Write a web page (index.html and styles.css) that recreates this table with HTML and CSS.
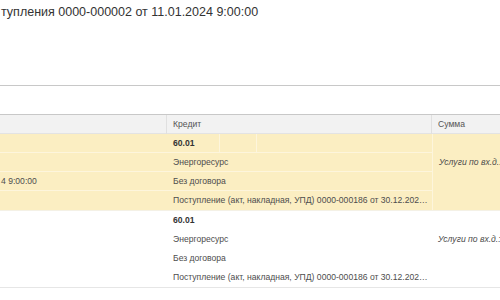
FILE: index.html
```html
<!DOCTYPE html>
<html lang="ru">
<head>
  <meta charset="UTF-8">
  <meta name="viewport" content="width=device-width, initial-scale=1.0">
  <title>Движения документа</title>
  <link rel="stylesheet" href="styles.css">
</head>
<body>
  <h1 class="doc-title">тупления 0000-000002 от 11.01.2024 9:00:00</h1>
  <div class="toolbar"></div>

  <div class="grid">
    <div class="grid-head">
      <div class="hcell"></div>
      <div class="hcell credit">Кредит</div>
      <div class="hcell sum">Сумма</div>
    </div>

    <!-- выделенная запись -->
    <div class="entry selected">
      <div class="cell left r1"></div>
      <div class="cell left r2"></div>
      <div class="cell left r3">4 9:00:00</div>
      <div class="cell left r4"></div>
      <div class="cell acc r1 bold">60.01</div>
      <div class="cell sub1 r1"></div>
      <div class="cell sub2 r1"></div>
      <div class="cell wide r2">Энергоресурс</div>
      <div class="cell wide r3">Без договора</div>
      <div class="cell wide r4">Поступление (акт, накладная, УПД) 0000-000186 от 30.12.202…</div>
      <div class="cell amount">Услуги по вх.д.:</div>
    </div>

    <div class="entry">
      <div class="cell left r1"></div>
      <div class="cell left r2"></div>
      <div class="cell left r3"></div>
      <div class="cell left r4"></div>
      <div class="cell acc r1 bold">60.01</div>
      <div class="cell sub1 r1"></div>
      <div class="cell sub2 r1"></div>
      <div class="cell wide r2">Энергоресурс</div>
      <div class="cell wide r3">Без договора</div>
      <div class="cell wide r4">Поступление (акт, накладная, УПД) 0000-000186 от 30.12.202…</div>
      <div class="cell amount">Услуги по вх.д.:</div>
    </div>
  </div>
</body>
</html>
```

FILE: styles.css
```css
body {
  margin: 0;
  background: #fff;
  font-family: Arial, "Liberation Sans", sans-serif;
  color: #4d4d4d;
  overflow: hidden;
}

.doc-title {
  margin: 0;
  padding: 4px 0 0 1px;
  height: 20px;
  font-size: 12.5px;
  font-weight: normal;
  line-height: 17px;
  color: #333;
  white-space: nowrap;
}

.toolbar {
  height: 61px;
  border-bottom: 1px solid #c8c8c8;
}

.grid {
  margin-top: 28px;
  font-size: 8.6px;
}

.grid-head {
  display: grid;
  grid-template-columns: 167px 265px 1fr;
  height: 20px;
  box-sizing: border-box;
  border-top: 1px solid #c8c8c8;
  border-bottom: 1px solid #e3e3e3;
  background: #f2f2f2;
}

.hcell {
  line-height: 19px;
  padding-left: 6px;
  border-right: 1px solid #e0e0e0;
  color: #555;
  white-space: nowrap;
}

.hcell.sum {
  border-right: none;
}

.entry {
  display: grid;
  grid-template-columns: 167px 53px 37px 175px 1fr;
  grid-template-rows: repeat(4, 19px);
  border-bottom: 1px solid #e6e6e6;
  background: #fff;
}

.entry.selected {
  background: #fbeec2;
  border-bottom-color: #f4f1e6;
}

.cell {
  box-sizing: border-box;
  line-height: 18px;
  padding-left: 6px;
  white-space: nowrap;
}

.selected .cell {
  border-bottom: 1px solid #fdf5dc;
}

.selected .cell.r4,
.selected .cell.amount {
  border-bottom: none;
}

.r1 { grid-row: 1; }
.r2 { grid-row: 2; }
.r3 { grid-row: 3; }
.r4 { grid-row: 4; }

.left {
  grid-column: 1;
  padding-left: 1px;
}

.acc { grid-column: 2; }
.sub1 { grid-column: 3; }
.sub2 { grid-column: 4; }
.wide { grid-column: 2 / 5; }

.selected .acc,
.selected .sub1 {
  border-right: 1px solid #fdf5dc;
}

.bold {
  font-weight: bold;
  color: #333;
}

.amount {
  grid-column: 5;
  grid-row: 1 / 5;
  padding-top: 19px;
  font-style: italic;
}

.selected .amount {
  border-left: 1px solid #fdf5dc;
}
```
